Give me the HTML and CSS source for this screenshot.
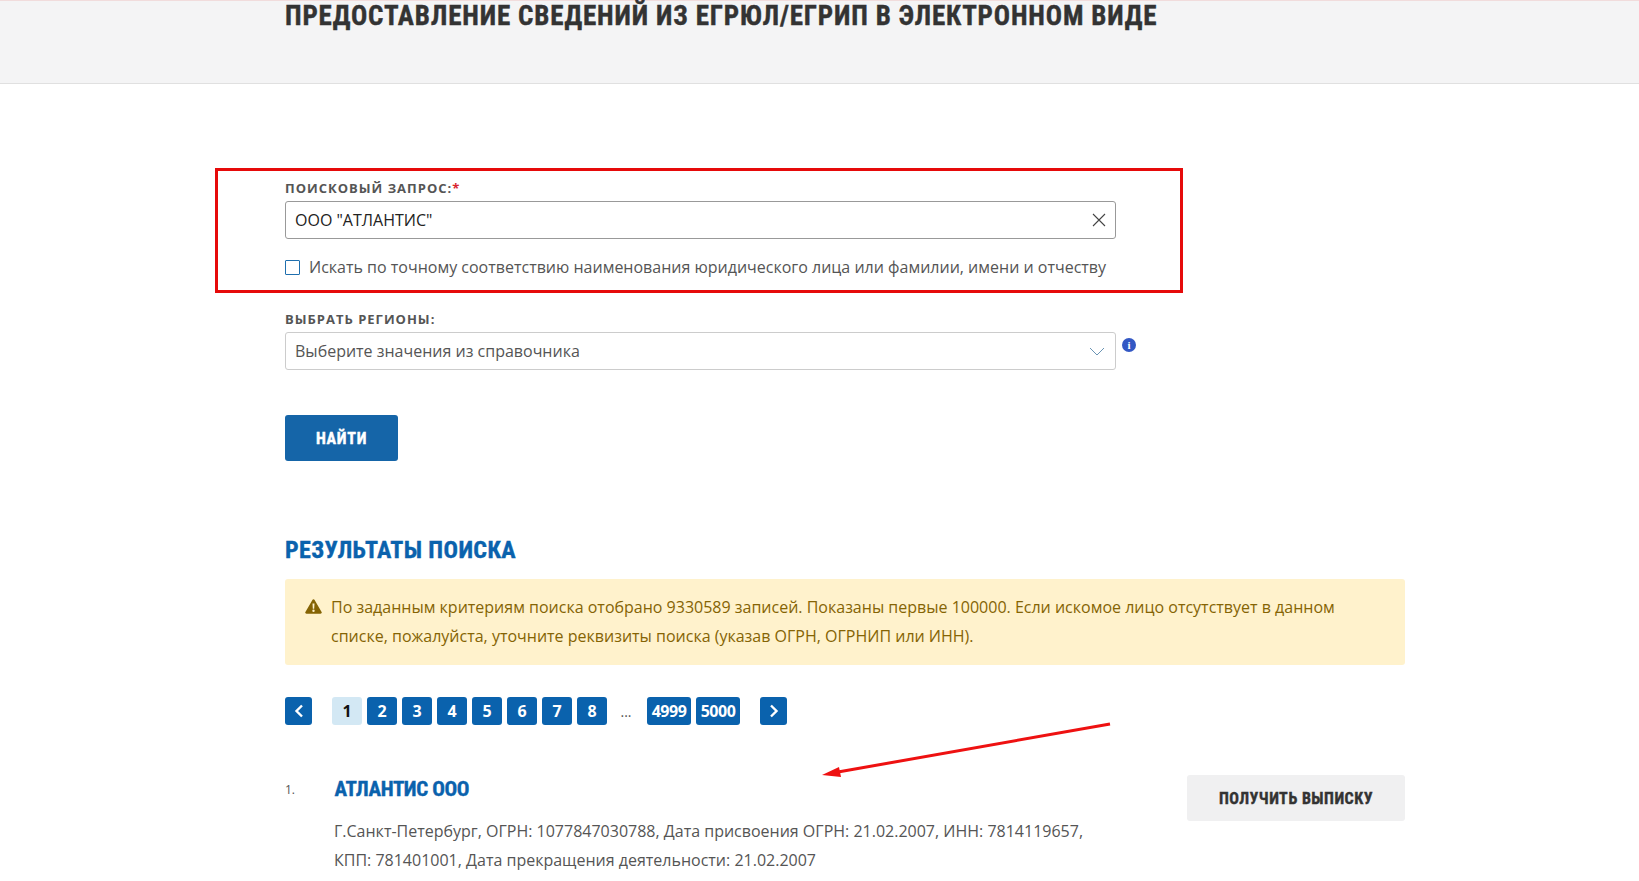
FILE: index.html
```html
<!DOCTYPE html>
<html lang="ru">
<head>
<meta charset="utf-8">
<title>Предоставление сведений из ЕГРЮЛ/ЕГРИП</title>
<link rel="stylesheet" href="styles.css">
</head>
<body>
<header class="top">
  <div class="wrap"><h1 class="page-title">ПРЕДОСТАВЛЕНИЕ СВЕДЕНИЙ ИЗ ЕГРЮЛ/ЕГРИП В ЭЛЕКТРОННОМ ВИДЕ</h1></div>
</header>
<main class="wrap content">
  <form class="form">
    <label class="label">ПОИСКОВЫЙ ЗАПРОС:<span class="req">*</span></label>
    <div class="field field-dark">
      <span class="value">ООО "АТЛАНТИС"</span>
      <svg class="field-icon" width="14" height="14" viewBox="0 0 14 14"><path d="M1 1L13 13M13 1L1 13" stroke="#444" stroke-width="1.1" fill="none"/></svg>
    </div>
    <div class="check-row">
      <span class="checkbox"></span>
      <span class="check-text">Искать по точному соответствию наименования юридического лица или фамилии, имени и отчеству</span>
    </div>
    <label class="label label-second">ВЫБРАТЬ РЕГИОНЫ:</label>
    <div class="select-row">
      <div class="field field-light">
        <span class="placeholder">Выберите значения из справочника</span>
        <svg class="field-icon chevron" width="16" height="9" viewBox="0 0 16 9"><path d="M1 1L8 8L15 1" stroke="#6a94b4" stroke-width="1" fill="none"/></svg>
      </div>
      <span class="info">i</span>
    </div>
    <button type="button" class="btn-primary">НАЙТИ</button>
  </form>

  <h2 class="results-title">РЕЗУЛЬТАТЫ ПОИСКА</h2>
  <div class="alert">
    <svg class="alert-icon" width="17" height="15" viewBox="0 0 17 15"><path fill-rule="evenodd" d="M8.5 0.3c.5 0 .9.3 1.1.7l7 12c.5.8-.1 1.8-1.1 1.8H1.5c-1 0-1.6-1-1.1-1.8l7-12c.2-.4.6-.7 1.1-.7zM7.5 4.5l.3 5.2h1.4l.3-5.2zM8.5 10.6a1.2 1.2 0 1 0 0 2.4a1.2 1.2 0 0 0 0-2.4z" fill="#856404"/></svg>
    <p class="alert-text">По заданным критериям поиска отобрано 9330589 записей. Показаны первые 100000. Если искомое лицо отсутствует в данном списке, пожалуйста, уточните реквизиты поиска (указав ОГРН, ОГРНИП или ИНН).</p>
  </div>

  <nav class="pager">
    <a class="page arrow arrow-prev"><svg width="10" height="14" viewBox="0 0 10 14"><path d="M8 1.5L2.5 7L8 12.5" stroke="#fff" stroke-width="2.4" fill="none"/></svg></a>
    <a class="page current">1</a>
    <a class="page">2</a>
    <a class="page">3</a>
    <a class="page">4</a>
    <a class="page">5</a>
    <a class="page">6</a>
    <a class="page">7</a>
    <a class="page">8</a>
    <span class="dots">...</span>
    <a class="page wide">4999</a>
    <a class="page wide">5000</a>
    <a class="page arrow arrow-next"><svg width="10" height="14" viewBox="0 0 10 14"><path d="M2 1.5L7.5 7L2 12.5" stroke="#fff" stroke-width="2.4" fill="none"/></svg></a>
  </nav>

  <article class="result">
    <span class="result-num">1.</span>
    <div class="result-body">
      <a class="result-name">АТЛАНТИС ООО</a>
      <p class="result-desc">Г.Санкт-Петербург, ОГРН: 1077847030788, Дата присвоения ОГРН: 21.02.2007, ИНН: 7814119657, КПП: 781401001, Дата прекращения деятельности: 21.02.2007</p>
    </div>
    <button type="button" class="btn-secondary">ПОЛУЧИТЬ ВЫПИСКУ</button>
  </article>
</main>

<div class="mark-box"></div>
<svg class="mark-arrow" width="300" height="70" viewBox="0 0 300 70">
  <path d="M294 9L22 57" stroke="#ee1111" stroke-width="3" fill="none"/>
  <path d="M6 60L23 52L25 62Z" fill="#ee1111"/>
</svg>
</body>
</html>
```
FILE: styles.css
```css
* { box-sizing: border-box; }
html, body { margin: 0; padding: 0; height: 881px; overflow: hidden; background: #fff; }
body { position: relative; font-family: "Open Sans", "Noto Sans", sans-serif; font-size: 16px; color: #555; }
.wrap { margin-left: 285px; width: 1120px; }

.top { height: 84px; background: #f4f4f5; border-top: 1px solid #f1dcdc; border-bottom: 1px solid #e0e0e0; }
.page-title, .results-title, .result-name, .btn-primary, .btn-secondary {
  font-family: "Liberation Sans Narrow", "Roboto Condensed", "Liberation Sans", sans-serif;
  font-weight: 700;
  -webkit-text-stroke: .4px currentColor;
}
.page-title { margin: 0; font-size: 27px; line-height: 30px; letter-spacing: .84px; color: #333; white-space: nowrap; }

.content { padding-top: 98px; }
.label { display: block; height: 19px; font-size: 13px; line-height: 13px; font-weight: 700; letter-spacing: 1px; color: #555; }
.req { color: #d9232e; }
.label-second { margin-top: 34px; }
.field { width: 831px; height: 38px; display: flex; align-items: center; justify-content: space-between; background: #fff; border-radius: 3px; padding: 0 9px; }
.field-dark { border: 1px solid #999; }
.field-light { border: 1px solid #ccc; }
.value { color: #222; }
.placeholder { color: #555; }
.field-icon { display: block; flex: none; }
.chevron { margin-right: 1px; }
.check-row { display: flex; align-items: center; gap: 9px; margin-top: 16px; height: 24px; }
.checkbox { width: 15px; height: 15px; border: 1px solid #1f6fae; border-radius: 1px; flex: none; background: #fff; }
.check-text { white-space: nowrap; }
.select-row { display: flex; align-items: flex-start; gap: 6px; }
.info { margin-top: 6px; width: 14px; height: 14px; border-radius: 50%; background: #3358c4; color: #fff; font: 700 11px/14px "Liberation Serif", serif; text-align: center; }
.btn-primary { display: block; margin-top: 45px; width: 113px; height: 46px; border: 0; border-radius: 3px; background: #1565a8; color: #fff; font-size: 16px; letter-spacing: .7px; }

.results-title { margin: 74px 0 0; font-size: 24px; line-height: 30px; letter-spacing: .4px; color: #0a62ad; }
.alert { display: flex; gap: 9px; margin-top: 14px; height: 86px; padding: 14px 20px 0; background: #fff2cc; border-radius: 3px; color: #856404; }
.alert-icon { flex: none; margin-top: 6px; }
.alert-text { margin: 0; line-height: 29px; }

.pager { display: flex; align-items: center; gap: 5px; margin-top: 32px; height: 28px; }
.page { width: 30px; height: 28px; border-radius: 3px; background: #0a62ad; color: #fff; font-size: 16px; font-weight: 700; display: flex; align-items: center; justify-content: center; }
.current { background: #d3e8f4; color: #111; }
.wide { width: 44px; letter-spacing: -.5px; }
.arrow { width: 27px; }
.arrow-prev { margin-right: 15px; }
.arrow-next { margin-left: 15px; }
.dots { width: 28px; text-align: center; font-size: 14px; margin-right: 2px; }

.result { display: flex; align-items: flex-start; margin-top: 35px; }
.result-num { width: 50px; font-size: 12px; padding-top: 21px; }
.result-body { width: 760px; padding-top: 15px; }
.result-name { display: block; font-size: 21px; line-height: 28px; letter-spacing: -.4px; color: #0a62ad; margin-left: -.5px; }
.result-desc { margin: 14px 0 0 -1px; line-height: 29px; }
.btn-secondary { margin: 15px 0 0 auto; width: 218px; height: 46px; border: 0; border-radius: 3px; background: #f0f0f1; color: #333; font-size: 16px; letter-spacing: .5px; }

.mark-box { position: absolute; left: 215px; top: 168px; width: 968px; height: 125px; border: 3px solid #e60a0a; }
.mark-arrow { position: absolute; left: 816px; top: 715px; }
```
